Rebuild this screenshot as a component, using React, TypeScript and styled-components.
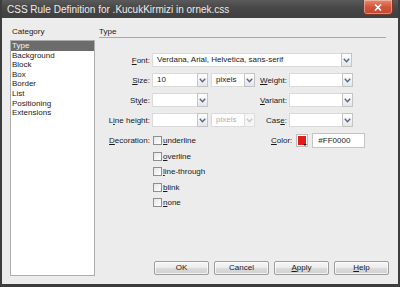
import React from 'react';
import styled, { createGlobalStyle } from 'styled-components';

const GlobalStyle = createGlobalStyle`
  html, body {
    margin: 0;
    padding: 0;
    background: #ececec;
  }
  body {
    font-family: "Liberation Sans", Arial, sans-serif;
    font-size: 8px;
    color: #1a1a1a;
  }
`;

const Window = styled.div`
  width: 400px;
  height: 287px;
  box-sizing: border-box;
  display: flex;
  flex-direction: column;
  background: #ececec;
  border-left: 2px solid #3d3d3d;
  border-right: 2px solid #3d3d3d;
  border-bottom: 3px solid #3d3d3d;
  overflow: hidden;
`;

const TitleBar = styled.div`
  height: 18px;
  flex: none;
  display: flex;
  align-items: center;
  justify-content: space-between;
  padding: 0 5px 0 5px;
  background: linear-gradient(#5a5a5a, #474747 45%, #3f3f3f);
  color: #ececec;
  font-size: 10px;
`;

const CloseButton = styled.div`
  width: 30px;
  height: 15px;
  margin-top: -3px;
  box-sizing: border-box;
  display: flex;
  align-items: center;
  justify-content: center;
  border: 1px solid #7a3a2a;
  border-top: none;
  border-radius: 0 0 4px 4px;
  background: linear-gradient(#e88a6e, #d2553a 50%, #c24a30);
  box-shadow: inset 0 0 0 1px rgba(255, 255, 255, 0.35);
`;

const Body = styled.div`
  flex: 1;
  display: flex;
  padding: 8px 6px 5px 8px;
  gap: 4px;
  min-height: 0;
`;

const Sidebar = styled.div`
  width: 85px;
  display: flex;
  flex-direction: column;
`;

const SectionTitle = styled.div`
  height: 14px;
  line-height: 12px;
  padding-left: 2px;
`;

const ListBox = styled.div`
  flex: 1;
  margin-bottom: 3px;
  background: #fff;
  border: 1px solid #adadad;
`;

const ListItem = styled.div<{ $selected?: boolean }>`
  height: 9.6px;
  line-height: 9.6px;
  padding-left: 1px;
  background: ${(p) => (p.$selected ? '#6c6c6c' : 'transparent')};
  color: ${(p) => (p.$selected ? '#f4f4f4' : '#1a1a1a')};
`;

const Panel = styled.div`
  flex: 1;
  display: flex;
  flex-direction: column;
`;

const PanelHeader = styled(SectionTitle)`
  margin-right: 6px;
  padding-left: 0;
  border-bottom: 1px solid #a9a9a9;
  height: 11px;
`;

const Form = styled.div`
  margin-top: 15px;
  display: flex;
  flex-direction: column;
  gap: 6px;
`;

const Row = styled.div`
  display: grid;
  grid-template-columns: 53px 104px 33px 64px;
  height: 14px;
  align-items: center;
`;

const Label = styled.div`
  text-align: right;
  padding-right: 2px;
  white-space: nowrap;
`;

const Key = styled.span`
  text-decoration: underline;
`;

const Controls = styled.div<{ $span?: number }>`
  grid-column: span ${(p) => p.$span || 1};
  display: flex;
  align-items: center;
  gap: 3px;
  height: 14px;
`;

const SelectBox = styled.div<{ $width: number }>`
  width: ${(p) => p.$width}px;
  height: 14px;
  display: flex;
  box-sizing: border-box;
`;

const SelectValue = styled.div<{ $disabled?: boolean }>`
  flex: 1;
  background: #fff;
  border: 1px solid #dadada;
  border-right: none;
  padding-left: 4px;
  line-height: 12px;
  color: ${(p) => (p.$disabled ? '#b0b0b0' : '#1a1a1a')};
  white-space: nowrap;
  overflow: hidden;
`;

const ArrowButton = styled.div<{ $disabled?: boolean }>`
  width: 11px;
  box-sizing: border-box;
  display: flex;
  align-items: center;
  justify-content: center;
  border: 1px solid ${(p) => (p.$disabled ? '#dedede' : '#c4c4c4')};
  background: ${(p) => (p.$disabled ? '#f6f6f6' : 'linear-gradient(#ffffff, #e4e6ea)')};
`;

const DecorationRow = styled.div`
  display: grid;
  grid-template-columns: 53px 119px auto;
  align-items: start;
  padding-top: 3px;
`;

const DecorationLabel = styled(Label)`
  line-height: 9px;
`;

const CheckList = styled.div`
  display: flex;
  flex-direction: column;
  gap: 6.5px;
  padding-left: 1px;
`;

const CheckRow = styled.div`
  display: flex;
  align-items: center;
  gap: 1px;
  height: 9px;
`;

const CheckBox = styled.div`
  width: 9px;
  height: 9px;
  box-sizing: border-box;
  border: 1px solid #8e8e8e;
  background: linear-gradient(135deg, #e6e6e6, #ffffff);
`;

const ColorGroup = styled.div`
  display: flex;
  align-items: center;
  gap: 4px;
  margin-top: -3px;
`;

const Swatch = styled.div`
  position: relative;
  width: 12px;
  height: 13px;
  box-sizing: border-box;
  border: 1px solid #bdbdbd;
  background: #fff;
  padding: 1px;
  display: flex;
`;

const SwatchFill = styled.div`
  flex: 1;
  background: #e21b1b;
`;

const SwatchCorner = styled.div`
  position: absolute;
  right: 0;
  bottom: 0;
  width: 0;
  height: 0;
  border-left: 2px solid transparent;
  border-right: 2px solid transparent;
  border-top: 2px solid #222;
`;

const TextInput = styled.div`
  width: 53px;
  height: 15px;
  box-sizing: border-box;
  background: #fff;
  border: 1px solid #c4c4c4;
  padding-left: 5px;
  line-height: 13px;
`;

const Spacer = styled.div`
  flex: 1;
`;

const ButtonRow = styled.div`
  display: flex;
  gap: 5px;
  padding-left: 55px;
  margin-bottom: 4px;
`;

const Button = styled.div`
  width: 55px;
  height: 14px;
  box-sizing: border-box;
  border: 1px solid #9c9c9c;
  border-radius: 2px;
  background: linear-gradient(#f7f7f7, #ebebeb 50%, #dcdcdc 51%, #cfcfcf);
  box-shadow: inset 0 0 0 1px rgba(255, 255, 255, 0.7);
  text-align: center;
  line-height: 12px;
`;

const Chevron = ({ disabled }: { disabled?: boolean }) => (
  <svg width="7" height="5" viewBox="0 0 7 5">
    <path d="M0.8 0.8 L3.5 3.8 L6.2 0.8" fill="none" stroke={disabled ? '#c8c8c8' : '#56668a'} strokeWidth="1.4" />
  </svg>
);

function Select({ width, value, disabled }: { width: number; value?: string; disabled?: boolean }) {
  return (
    <SelectBox $width={width}>
      <SelectValue $disabled={disabled}>{value}</SelectValue>
      <ArrowButton $disabled={disabled}>
        <Chevron disabled={disabled} />
      </ArrowButton>
    </SelectBox>
  );
}

const categories = ['Type', 'Background', 'Block', 'Box', 'Border', 'List', 'Positioning', 'Extensions'];

const decorations: [string, string][] = [
  ['u', 'nderline'],
  ['o', 'verline'],
  ['l', 'ine-through'],
  ['b', 'link'],
  ['n', 'one'],
];

export default function App() {
  return (
    <>
      <GlobalStyle />
      <Window>
        <TitleBar>
          <span>CSS Rule Definition for .KucukKirmizi in ornek.css</span>
          <CloseButton>
            <svg width="8" height="7" viewBox="0 0 8 7">
              <path d="M1 0.5 L7 6.5 M7 0.5 L1 6.5" stroke="#fff" strokeWidth="1.6" />
            </svg>
          </CloseButton>
        </TitleBar>
        <Body>
          <Sidebar>
            <SectionTitle>Category</SectionTitle>
            <ListBox>
              {categories.map((c, i) => (
                <ListItem key={c} $selected={i === 0}>
                  {c}
                </ListItem>
              ))}
            </ListBox>
          </Sidebar>
          <Panel>
            <PanelHeader>Type</PanelHeader>
            <Form>
              <Row>
                <Label>
                  <Key>F</Key>ont:
                </Label>
                <Controls $span={3}>
                  <Select width={200} value="Verdana, Arial, Helvetica, sans-serif" />
                </Controls>
              </Row>

              <Row>
                <Label>
                  <Key>S</Key>ize:
                </Label>
                <Controls>
                  <Select width={56} value="10" />
                  <Select width={44} value="pixels" />
                </Controls>
                <Label>
                  <Key>W</Key>eight:
                </Label>
                <Controls>
                  <Select width={64} />
                </Controls>
              </Row>

              <Row>
                <Label>
                  St<Key>y</Key>le:
                </Label>
                <Controls>
                  <Select width={56} />
                </Controls>
                <Label>
                  <Key>V</Key>ariant:
                </Label>
                <Controls>
                  <Select width={64} />
                </Controls>
              </Row>

              <Row>
                <Label>
                  L<Key>i</Key>ne height:
                </Label>
                <Controls>
                  <Select width={56} />
                  <Select width={44} value="pixels" disabled />
                </Controls>
                <Label>
                  Cas<Key>e</Key>:
                </Label>
                <Controls>
                  <Select width={64} />
                </Controls>
              </Row>

              <DecorationRow>
                <DecorationLabel>
                  <Key>D</Key>ecoration:
                </DecorationLabel>
                <CheckList>
                  {decorations.map(([k, rest]) => (
                    <CheckRow key={k + rest}>
                      <CheckBox />
                      <span>
                        <Key>{k}</Key>
                        {rest}
                      </span>
                    </CheckRow>
                  ))}
                </CheckList>
                <ColorGroup>
                  <span>
                    <Key>C</Key>olor:
                  </span>
                  <Swatch>
                    <SwatchFill />
                    <SwatchCorner />
                  </Swatch>
                  <TextInput>#FF0000</TextInput>
                </ColorGroup>
              </DecorationRow>
            </Form>
            <Spacer />
            <ButtonRow>
              <Button>OK</Button>
              <Button>Cancel</Button>
              <Button>
                <Key>A</Key>pply
              </Button>
              <Button>
                <Key>H</Key>elp
              </Button>
            </ButtonRow>
          </Panel>
        </Body>
      </Window>
    </>
  );
}
